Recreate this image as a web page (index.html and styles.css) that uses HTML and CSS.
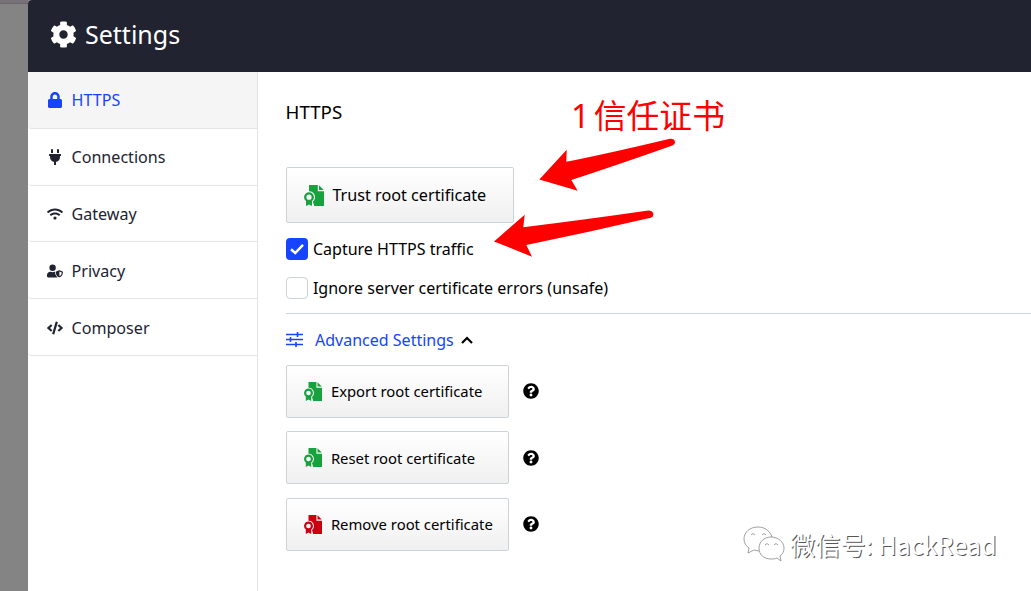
FILE: index.html
```html
<!DOCTYPE html>
<html lang="en">
<head>
<meta charset="utf-8">
<title>Settings</title>
<link rel="stylesheet" href="styles.css">
</head>
<body>
<svg width="0" height="0" class="defs">
  <symbol id="cert" viewBox="0 0 20 21">
    <path d="M5 0H13.8V6.2H20V21H10.2L8.9 16.6A5.9 5.9 0 0 0 5 6.2Z"/>
    <path d="M15 0.3L19.7 5H15Z"/>
    <path fill-rule="evenodd" d="M5 7.200A5 5 0 0 1 8 16.100V21L5 19.400L2 21V16.100A5 5 0 0 1 5 7.200ZM5 9.600A2.600 2.600 0 1 0 5 14.800A2.600 2.600 0 1 0 5 9.600Z"/>
  </symbol>
  <symbol id="help" viewBox="0 0 512 512">
    <path d="M504 256c0 137-111 248-248 248S8 393 8 256 119 8 256 8s248 111 248 248zM262.700 90c-54.500 0-89.300 23-116.500 63.800-3.600 5.300-2.400 12.400 2.700 16.300l34.700 26.300c5.200 3.900 12.600 3 16.700-2.100 17.900-22.700 30.100-35.800 57.300-35.800 20.400 0 45.700 13.100 45.700 33 0 15-12.400 22.700-32.500 34C247.100 238.500 216 254.900 216 296v4c0 6.600 5.400 12 12 12h56c6.600 0 12-5.400 12-12v-1.300c0-28.500 83.200-29.600 83.200-106.700 0-58-60.200-102-116.500-102zM256 338c-25.400 0-46 20.600-46 46 0 25.400 20.600 46 46 46s46-20.600 46-46c0-25.400-20.600-46-46-46z"/>
  </symbol>
</svg>
<div class="app">
  <div class="backdrop"></div>
  <div class="modal">
    <header class="header">
      <svg class="gear" viewBox="0 0 512 512"><path d="M487.400 315.700l-42.600-24.600c4.300-23.200 4.300-47 0-70.200l42.600-24.600c4.900-2.800 7.100-8.600 5.500-14-11.100-35.600-30-67.800-54.700-94.600-3.800-4.100-10-5.100-14.800-2.300L380.800 110c-17.900-15.400-38.500-27.300-60.800-35.100V25.800c0-5.600-3.900-10.500-9.400-11.700-36.700-8.200-74.300-7.800-109.200 0-5.500 1.200-9.400 6.100-9.400 11.700V75c-22.200 7.900-42.800 19.800-60.800 35.100L88.700 85.500c-4.900-2.800-11-1.900-14.800 2.300-24.700 26.700-43.600 58.900-54.700 94.600-1.700 5.400.6 11.200 5.500 14L67.300 221c-4.300 23.200-4.300 47 0 70.200l-42.600 24.600c-4.900 2.800-7.100 8.600-5.500 14 11.100 35.600 30 67.800 54.700 94.600 3.800 4.100 10 5.100 14.800 2.300l42.600-24.600c17.900 15.400 38.500 27.300 60.800 35.100v49.200c0 5.600 3.900 10.500 9.400 11.700 36.700 8.200 74.300 7.800 109.200 0 5.500-1.200 9.400-6.100 9.400-11.700v-49.200c22.200-7.900 42.800-19.800 60.800-35.100l42.600 24.600c4.900 2.800 11 1.900 14.800-2.300 24.700-26.700 43.600-58.900 54.700-94.600 1.500-5.500-.7-11.300-5.600-14.100zM256 336c-44.100 0-80-35.900-80-80s35.900-80 80-80 80 35.900 80 80-35.900 80-80 80z"/></svg>
      <span class="title">Settings</span>
    </header>
    <div class="body">
      <nav class="nav">
        <a class="item active"><svg viewBox="0 0 448 512"><path d="M400 224h-24v-72C376 68.200 307.800 0 224 0S72 68.200 72 152v72H48c-26.500 0-48 21.500-48 48v192c0 26.500 21.500 48 48 48h352c26.500 0 48-21.500 48-48V272c0-26.500-21.500-48-48-48zm-104 0H152v-72c0-39.700 32.300-72 72-72s72 32.300 72 72v72z"/></svg><span>HTTPS</span></a>
        <a class="item"><svg viewBox="0 0 384 512"><path d="M320 32a32 32 0 0 0-64 0v96h64zm48 128H16a16 16 0 0 0-16 16v32a16 16 0 0 0 16 16h16v32a160.100 160.100 0 0 0 128 156.800V512h64v-99.200A160.100 160.100 0 0 0 352 256v-32h16a16 16 0 0 0 16-16v-32a16 16 0 0 0-16-16zM128 32a32 32 0 0 0-64 0v96h64z"/></svg><span>Connections</span></a>
        <a class="item"><svg viewBox="0 0 640 512"><path d="M634.900 154.900C457.700-9 182.200-8.900 5.100 154.900c-6.700 6.200-6.800 16.600-.4 23l34.200 34c6.100 6.100 16 6.200 22.400.4 145.900-133.700 371.300-133.700 517.300 0 6.400 5.900 16.300 5.700 22.400-.4l34.200-34c6.500-6.400 6.300-16.800-.3-23zM320 352c-35.300 0-64 28.700-64 64s28.700 64 64 64 64-28.700 64-64-28.700-64-64-64zm202.700-83.600c-115.300-101.900-290.200-101.800-405.300 0-6.900 6.100-7.100 16.700-.6 23.200l34.400 34c6 5.900 15.700 6.300 22.100.8 84-72.600 209.700-72.400 293.500 0 6.400 5.500 16.100 5.200 22.100-.8l34.400-34c6.500-6.500 6.300-17.100-.6-23.200z"/></svg><span>Gateway</span></a>
        <a class="item"><svg viewBox="0 0 640 512"><path d="M224 256a128 128 0 1 0 0-256 128 128 0 0 0 0 256zm96 64c0-8 2-16 5-24-7-5-8-8-12-8h-17a174 174 0 0 1-145 0h-17C60 288 0 348 0 422v42c0 26 22 48 48 48h352c8 0 16-2 23-6-60-50-103-110-103-186z"/><path fill-rule="evenodd" d="M622 271l-116-45a34 34 0 0 0-24 0l-116 45c-10 4-18 14-18 26 0 112 68 189 134 213 8 3 16 3 24 0 53-20 134-89 134-213 0-12-8-22-18-26zM496 462V274l95 37c-6 81-52 132-95 151z"/></svg><span>Privacy</span></a>
        <a class="item"><svg viewBox="0 0 640 512"><path d="M278.900 511.500l-61-17.700c-6.400-1.800-10-8.500-8.200-14.900L346.200 8.700c1.800-6.400 8.500-10 14.900-8.200l61 17.700c6.400 1.800 10 8.500 8.200 14.900L293.800 503.300c-1.900 6.400-8.500 10.100-14.900 8.200zm-114-112.200l43.500-46.400c4.600-4.900 4.300-12.700-.8-17.200L117 256l90.600-79.700c5.100-4.500 5.500-12.300.8-17.200l-43.500-46.400c-4.500-4.800-12.100-5.100-17-.5L3.800 247.200c-5.100 4.700-5.100 12.800 0 17.500l144.100 135.100c4.900 4.600 12.500 4.400 17-.5zm327.200.6l144.100-135.100c5.100-4.700 5.100-12.800 0-17.500L492.100 112.100c-4.800-4.500-12.400-4.300-17 .5L431.600 159c-4.600 4.900-4.300 12.700.8 17.200L523 256l-90.600 79.700c-5.100 4.500-5.500 12.300-.8 17.200l43.500 46.400c4.500 4.900 12.100 5.100 17 .6z"/></svg><span>Composer</span></a>
      </nav>
      <main class="main">
        <h1 class="heading">HTTPS</h1>
        <button class="btn trust"><svg class="ok"><use href="#cert"/></svg><span>Trust root certificate</span></button>
        <label class="check first"><span class="box on"><svg viewBox="0 0 22 22"><path d="M5 11.300L9.200 15L17 6.800"/></svg></span><span>Capture HTTPS traffic</span></label>
        <label class="check"><span class="box"></span><span>Ignore server certificate errors (unsafe)</span></label>
        <div class="advanced">
          <svg class="sliders" viewBox="0 0 17 15"><path d="M0 2.500H17M0 7.500H17M0 12.500H17M11.500 0V5M4.500 5V10M10 10V15"/></svg>
          <span>Advanced Settings</span>
          <svg class="chev" viewBox="0 0 12 8"><path d="M1 7L6 2L11 7"/></svg>
        </div>
        <div class="row"><button class="btn"><svg class="ok"><use href="#cert"/></svg><span>Export root certificate</span></button><svg class="help"><use href="#help"/></svg></div>
        <div class="row"><button class="btn"><svg class="ok"><use href="#cert"/></svg><span>Reset root certificate</span></button><svg class="help"><use href="#help"/></svg></div>
        <div class="row"><button class="btn"><svg class="bad"><use href="#cert"/></svg><span>Remove root certificate</span></button><svg class="help"><use href="#help"/></svg></div>
      </main>
    </div>
  </div>
</div>
<svg class="arrows" viewBox="0 0 1031 591">
  <path d="M539.300 179.500L566.700 149.700L566.300 161.800Q610 153 670 138.700Q674.500 138.500 675 142Q675 144.700 671.700 145.700Q620 164 571.300 180L577.700 190.700Z"/>
  <path d="M494 241.400L524.700 214.700L523.300 227.200Q590 219 648.300 210.500Q653 210.500 653.300 214Q653.500 217 650.700 217.800Q590 232 526.300 245L532 256.700Z"/>
</svg>
<div class="note"><span class="one">1</span><span>信任证书</span></div>
<div class="mark">
  <svg viewBox="0 0 42 36"><path d="M29 11C27 5 22 1 15 1C7 1 1 6 1 13C1 17 3 20 6 22L5 27L11 24L16 25"/><path d="M28 11C21 11 16 16 16 22C16 29 21 33 28 33C30 33 32 33 34 32L38 35L37 30C40 28 41 25 41 22C41 16 35 11 28 11Z"/><path d="M8 9Q10 6 12 9M19 9Q21 6 23 9M22 19Q24 16 26 19M31 19Q33 16 35 19"/></svg>
  <span>微信号: HackRead</span>
</div>
</body>
</html>
```
FILE: styles.css
```css
* { box-sizing: border-box; }
body { margin: 0; width: 1031px; height: 591px; overflow: hidden; position: relative; background: #fff; font-family: "Noto Sans", "Noto Sans CJK SC", sans-serif; color: #000; }
.defs { position: absolute; }
.app { display: flex; height: 591px; background: #848484; }
.backdrop { width: 28px; height: 4px; background: #777278; border-bottom: 1px solid #6c666c; }
.modal { flex: 1; display: flex; flex-direction: column; background: #fff; border-top-left-radius: 4px; overflow: hidden; }
.header { height: 72px; flex: none; background: #212330; display: flex; align-items: center; gap: 8px; padding: 0 0 4px 22px; color: #fff; }
.gear { width: 27px; height: 27px; fill: #fff; }
.title { font-size: 25px; line-height: 34px; padding-bottom: 1px; }
.body { flex: 1; display: flex; }
.nav { width: 230px; border-right: 1px solid #e4e5e6; }
.item { height: 56.800px; display: flex; align-items: center; gap: 8.500px; padding-left: 19px; border-bottom: 1.500px solid #e4e5e6; border-bottom-left-radius: 4px; font-size: 16.100px; color: #212330; }
.item svg { width: 16px; height: 16px; fill: #212330; }
.item.active { background: #f5f5f5; color: #1744ff; }
.item.active svg { fill: #1744ff; }
.item:nth-child(n+3) { padding-top: 1px; }
.main { flex: 1; padding: 27px 0 0 27.600px; }
.heading { margin: 0 0 42px; font-size: 18.700px; line-height: 26px; font-weight: 400; }
.btn { width: 223px; height: 53px; display: flex; align-items: center; gap: 9px; padding: 0 0 0 17.300px; border: 1px solid #cdd3d6; border-radius: 2px; background: linear-gradient(#fff, #f0f0f0); font: 14.850px "Noto Sans", sans-serif; color: #000; }
.btn svg { width: 18px; height: 19px; }
.trust { width: 228.500px; height: 56px; font-size: 16.200px; gap: 8.500px; }
.trust svg { width: 20px; height: 21px; }
.ok { fill: #18a23e; }
.bad { fill: #c8000f; }
.check { display: flex; align-items: center; gap: 5.300px; height: 22px; margin-top: 16.700px; font-size: 16.050px; }
.check.first { margin-top: 15px; }
.box { width: 22px; height: 22px; border: 1px solid #cdd3d6; border-radius: 4px; display: flex; }
.box.on { background: #1744ff; border: 0; }
.box path { fill: none; stroke: #fff; stroke-width: 2.500; }
.advanced { margin-top: 14.800px; border-top: 1.500px solid #cdd3d6; height: 51.500px; padding-top: 0.500px; display: flex; align-items: center; color: #1744ff; font-size: 16.050px; }
.sliders { width: 17px; height: 15px; margin-right: 12.300px; fill: none; stroke: #1744ff; stroke-width: 1.600; }
.chev { width: 12px; height: 8px; margin-left: 7px; fill: none; stroke: #000; stroke-width: 2.200; }
.row { display: flex; align-items: center; gap: 14px; margin-bottom: 13.400px; }
.help { width: 16px; height: 16px; }
.arrows { position: absolute; left: 0; top: 0; width: 1031px; height: 591px; fill: #fe0000; }
.note { position: absolute; left: 571px; top: 91px; display: flex; gap: 4px; font: 32.800px/46px "Noto Sans CJK SC", sans-serif; color: #fe0000; }
.one { font-family: "Noto Sans", sans-serif; padding-top: 2px; }
.mark { position: absolute; left: 743px; top: 526px; display: flex; align-items: flex-start; gap: 5px; font: 25.200px/36px "Noto Sans CJK SC", sans-serif; color: #fff; text-shadow: 1px 1px 0 #555; white-space: nowrap; }
.mark svg { width: 42px; height: 36px; fill: none; stroke: #888; stroke-width: 0.800; }
```
